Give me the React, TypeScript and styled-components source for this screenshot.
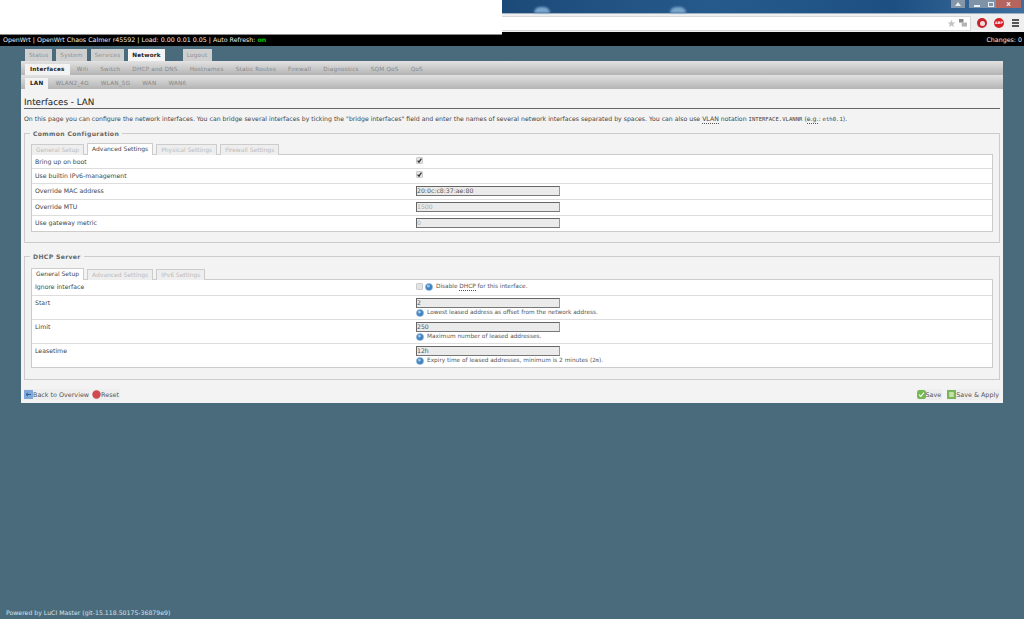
import styled, { createGlobalStyle } from "styled-components";

const GlobalStyle = createGlobalStyle`
	html, body {
		margin: 0;
		padding: 0;
		background: #4a6b7c;
	}
	body {
		font-family: "DejaVu Sans", Verdana, sans-serif;
		font-size: 6.6px;
		color: #333;
		text-rendering: geometricPrecision;
	}
`;

const mainTabs = ["Status", "System", "Services", "Network"];
const subTabs = ["Interfaces", "Wifi", "Switch", "DHCP and DNS", "Hostnames", "Static Routes", "Firewall", "Diagnostics", "SQM QoS", "QoS"];
const ifaceTabs = ["LAN", "WLAN2_4G", "WLAN_5G", "WAN", "WAN6"];

const InfoIcon = () => (
	<svg width="8" height="8" viewBox="0 0 8 8">
		<circle cx="4" cy="4" r="3.6" fill="#3f83c4" stroke="#9dbbd6" strokeWidth=".6" />
		<circle cx="3.4" cy="3" r="1.5" fill="#9cc6ea" />
	</svg>
);

const CheckBox = ({ checked }: { checked?: boolean }) => (
	<svg width="7" height="7" viewBox="0 0 7 7">
		<rect x=".4" y=".4" width="6.2" height="6.2" rx="1" fill="#e4e4e4" stroke="#b5b5b5" strokeWidth=".7" />
		{checked && <path d="M1.6 3.6 L3 5.2 L5.4 1.6" fill="none" stroke="#333" strokeWidth="1.3" />}
	</svg>
);

const App = () => {
	return (
		<Page>
			<GlobalStyle />
			<WhiteBlock />
			<Chrome>
				<WindowBand>
					<Streak />
					<Streak />
					<WindowButtons>
						<WinButton width={14} color="#8496a8">
							<svg width="6" height="4" viewBox="0 0 6 4"><path d="M0 4 L3 0 L6 4 Z" fill="#e8eef3" /></svg>
						</WinButton>
						<WinGap />
						<WinButton width={16} color="#7f93a8"><MinGlyph /></WinButton>
						<WinButton width={11} color="#7f93a8"><MaxGlyph /></WinButton>
						<WinButton width={25} color="#b5645e"><CloseGlyph>x</CloseGlyph></WinButton>
					</WindowButtons>
				</WindowBand>
				<BrowserBar>
					<AddressBox>
						<svg width="9" height="9" viewBox="0 0 24 24">
							<path d="M12 2 L15 9 L22 9.5 L16.8 14.2 L18.5 21.5 L12 17.6 L5.5 21.5 L7.2 14.2 L2 9.5 L9 9 Z" fill="#c4c4c4" />
						</svg>
						<svg width="8" height="8" viewBox="0 0 9 9">
							<rect x="0" y="0" width="5" height="4" fill="#8a8a8a" />
							<rect x="3" y="4" width="6" height="4.5" fill="#b5b5b5" />
						</svg>
					</AddressBox>
					<ExtIcon color="#c8242c"><ExtDot /></ExtIcon>
					<ExtIcon color="#d81f26"><AbpText>ABP</AbpText></ExtIcon>
					<Burger><span /><span /><span /></Burger>
				</BrowserBar>
			</Chrome>
			<HeaderBar>
				<span>OpenWrt | OpenWrt Chaos Calmer r45592 | Load: 0.00 0.01 0.05 | Auto Refresh: <OnText>on</OnText></span>
				<span>Changes: 0</span>
			</HeaderBar>

			<Wrapper>
				<MainNav>
					{mainTabs.map((t) => (
						<MainTab key={t} active={t === "Network"}>{t}</MainTab>
					))}
					<LogoutTab>Logout</LogoutTab>
				</MainNav>
				<Panel>
					<GreyNav>
						{subTabs.map((t, i) => (
							<GreyTab key={t} active={i === 0}>{t}</GreyTab>
						))}
					</GreyNav>
					<GreyNav>
						{ifaceTabs.map((t, i) => (
							<GreyTab key={t} active={i === 0}>{t}</GreyTab>
						))}
					</GreyNav>
					<Content>
						<Title>Interfaces - LAN</Title>
						<Description>
							On this page you can configure the network interfaces. You can bridge several interfaces by ticking the "bridge interfaces" field and enter the names of several network interfaces separated by spaces. You can also use <Abbr>VLAN</Abbr> notation <Code>INTERFACE.VLANNR</Code> (<Abbr>e.g.</Abbr>: <Code>eth0.1</Code>).
						</Description>

						<Section height={110} top={9}>
							<Legend>Common Configuration</Legend>
							<CfgTabs>
								<CfgTab>General Setup</CfgTab>
								<CfgTab active>Advanced Settings</CfgTab>
								<CfgTab>Physical Settings</CfgTab>
								<CfgTab>Firewall Settings</CfgTab>
							</CfgTabs>
							<CfgTable>
								<Row height={14}><RowLabel>Bring up on boot</RowLabel><RowValue><CheckBox checked /></RowValue></Row>
								<Row height={15}><RowLabel>Use builtin IPv6-management</RowLabel><RowValue><CheckBox checked /></RowValue></Row>
								<Row height={16}><RowLabel>Override MAC address</RowLabel><RowValue><TextBox>20:0c:c8:37:ae:80</TextBox></RowValue></Row>
								<Row height={16}><RowLabel>Override MTU</RowLabel><RowValue><TextBox muted>1500</TextBox></RowValue></Row>
								<Row height={15}><RowLabel>Use gateway metric</RowLabel><RowValue><TextBox muted>0</TextBox></RowValue></Row>
							</CfgTable>
						</Section>

						<Section height={124} top={11}>
							<Legend>DHCP Server</Legend>
							<CfgTabs>
								<CfgTab active>General Setup</CfgTab>
								<CfgTab>Advanced Settings</CfgTab>
								<CfgTab>IPv6 Settings</CfgTab>
							</CfgTabs>
							<CfgTable>
								<Row height={16}>
									<RowLabel>Ignore interface</RowLabel>
									<RowValue>
										<InlineHint><CheckBox /><InfoIcon /><HintText>Disable <Abbr>DHCP</Abbr> for this interface.</HintText></InlineHint>
									</RowValue>
								</Row>
								<Row height={24}>
									<RowLabel>Start</RowLabel>
									<RowValue><TextBox>2</TextBox><InlineHint><InfoIcon /><HintText>Lowest leased address as offset from the network address.</HintText></InlineHint></RowValue>
								</Row>
								<Row height={24}>
									<RowLabel>Limit</RowLabel>
									<RowValue><TextBox>250</TextBox><InlineHint><InfoIcon /><HintText>Maximum number of leased addresses.</HintText></InlineHint></RowValue>
								</Row>
								<Row height={23}>
									<RowLabel>Leasetime</RowLabel>
									<RowValue><TextBox>12h</TextBox><InlineHint><InfoIcon /><HintText>Expiry time of leased addresses, minimum is 2 minutes (<Code>2m</Code>).</HintText></InlineHint></RowValue>
								</Row>
							</CfgTable>
						</Section>

						<Actions>
							<ActionGroup gap={2}>
								<ActionButton>
									<svg width="9" height="9" viewBox="0 0 9 9">
										<rect width="9" height="9" fill="#7fa8d8" />
										<path d="M2 4.5 H7 M2 4.5 L4 2.8 M2 4.5 L4 6.2" stroke="#2c5f9e" strokeWidth="1" fill="none" />
									</svg>
									Back to Overview
								</ActionButton>
								<ActionButton>
									<svg width="9" height="9" viewBox="0 0 9 9"><circle cx="4.5" cy="4.5" r="4.2" fill="#cf4a50" /></svg>
									Reset
								</ActionButton>
							</ActionGroup>
							<ActionGroup gap={5}>
								<ActionButton>
									<svg width="9" height="9" viewBox="0 0 9 9">
										<rect width="9" height="9" rx="2.5" fill="#76b852" />
										<path d="M2 4.6 L3.8 6.4 L7 2.6" stroke="#fff" strokeWidth="1.1" fill="none" />
									</svg>
									Save
								</ActionButton>
								<ActionButton>
									<svg width="9" height="9" viewBox="0 0 9 9">
										<rect width="9" height="9" fill="#7ab55c" />
										<rect x="2.2" y="2" width="4.6" height="5" fill="#c8e0a8" />
									</svg>
									Save &amp; Apply
								</ActionButton>
							</ActionGroup>
						</Actions>
					</Content>
				</Panel>
			</Wrapper>
			<Footer>Powered by LuCI Master (git-15.118.50175-36879e9)</Footer>
		</Page>
	);
};

const Page = styled.div`
	position: relative;
	display: flex;
	flex-direction: column;
	width: 1024px;
	height: 619px;
	overflow: hidden;
	background: #4a6b7c;
`;

const WhiteBlock = styled.div`
	position: absolute;
	top: 0;
	left: 0;
	z-index: 2;
	width: 502px;
	height: 34px;
	background: #fff;
	border-bottom: 1px solid #8a8a8a;
`;

const Chrome = styled.div`
	display: flex;
	flex-direction: column;
	height: 32px;
	padding-left: 502px;
`;

const WindowBand = styled.div`
	display: flex;
	align-items: flex-start;
	gap: 120px;
	height: 13px;
	padding-left: 32px;
	background: linear-gradient(90deg, #1c4a78 0%, #265a8c 40%, #1d4f83 75%, #3f6f9e 100%);
`;

const Streak = styled.div`
	width: 16px;
	height: 6px;
	margin-top: 7px;
	border-radius: 8px 8px 0 0;
	background: #7ba6cc;
	filter: blur(1px);
`;

const WindowButtons = styled.div`
	display: flex;
	margin-left: auto;
	margin-right: 3px;
`;

const WinGap = styled.div`
	width: 4px;
`;

const WinButton = styled.div<{ width: number; color: string }>`
	display: flex;
	align-items: center;
	justify-content: center;
	width: ${({ width }) => width}px;
	height: 8px;
	background: ${({ color }) => color};
`;

const MinGlyph = styled.div`
	width: 6px;
	height: 2px;
	margin-top: 3px;
	background: #e8eef3;
`;

const MaxGlyph = styled.div`
	box-sizing: border-box;
	width: 6px;
	height: 5px;
	border: 1px solid #e8eef3;
`;

const CloseGlyph = styled.span`
	color: #f3e6e4;
	font-size: 7px;
	font-weight: bold;
	line-height: 8px;
`;

const BrowserBar = styled.div`
	display: flex;
	align-items: center;
	height: 19px;
	padding-right: 4px;
	background: #efefef;
	border-top: 1px solid #9fb1c2;
	box-sizing: border-box;
`;

const AddressBox = styled.div`
	display: flex;
	flex: 1;
	align-items: center;
	justify-content: flex-end;
	gap: 3px;
	box-sizing: border-box;
	height: 15px;
	padding-right: 3px;
	margin-right: 6px;
	background: #fff;
	border: 1px solid #d8d8d8;
	border-left: 0;
`;

const ExtIcon = styled.div<{ color: string }>`
	display: flex;
	align-items: center;
	justify-content: center;
	width: 10px;
	height: 10px;
	margin-right: 7px;
	border-radius: 50%;
	background: ${({ color }) => color};
`;

const ExtDot = styled.div`
	width: 5px;
	height: 5px;
	border-radius: 50%;
	background: #f3dede;
`;

const AbpText = styled.span`
	color: #fff;
	font-size: 3.5px;
	font-weight: bold;
`;

const Burger = styled.div`
	display: flex;
	flex-direction: column;
	gap: 1.5px;
	width: 7px;
	margin: 0 1px 0 1px;
	span {
		height: 1.5px;
		background: #555;
	}
`;

const HeaderBar = styled.div`
	position: relative;
	display: flex;
	align-items: center;
	justify-content: space-between;
	box-sizing: border-box;
	height: 14px;
	padding: 3px 2px 0 3px;
	background: #000;
	color: #eee;
	font-size: 6.3px;
`;

const OnText = styled.span`
	color: #0c0;
	font-weight: bold;
`;

const Wrapper = styled.div`
	display: flex;
	flex: 1;
	flex-direction: column;
	padding: 3px 21px 0;
`;

const MainNav = styled.div`
	display: flex;
	gap: 4px;
	height: 12px;
	padding-left: 4px;
`;

const MainTab = styled.div<{ active?: boolean }>`
	padding: 0 4px;
	background: ${({ active }) => (active ? "#f4f4f4" : "#cfcfcf")};
	color: ${({ active }) => (active ? "#222" : "#8f8f8f")};
	font-weight: ${({ active }) => (active ? "bold" : "normal")};
	font-size: 5.7px;
	letter-spacing: 0.2px;
	line-height: 14px;
`;

const LogoutTab = styled(MainTab)`
	margin-left: 14px;
`;

const Panel = styled.div`
	display: flex;
	flex-direction: column;
	width: 982px;
	height: 342px;
	background: #f3f3f3;
`;

const GreyNav = styled.div`
	display: flex;
	gap: 2px;
	height: 14px;
	padding-left: 4px;
	background: linear-gradient(#e2e2e2, #b4b4b4);
`;

const GreyTab = styled.div<{ active?: boolean }>`
	margin-top: 3px;
	padding: 0 5px;
	background: ${({ active }) => (active ? "#f3f3f3" : "transparent")};
	color: ${({ active }) => (active ? "#222" : "#888")};
	font-weight: ${({ active }) => (active ? "bold" : "normal")};
	font-size: 5.7px;
	letter-spacing: 0.22px;
	line-height: 12px;
`;

const Content = styled.div`
	display: flex;
	flex: 1;
	flex-direction: column;
	padding: 0 3px;
`;

const Title = styled.h2`
	box-sizing: border-box;
	height: 20px;
	margin: 0;
	padding-top: 9px;
	border-bottom: 1px solid #666;
	color: #222;
	font-size: 8.8px;
	font-weight: normal;
	line-height: 10px;
`;

const Description = styled.p`
	height: 14px;
	margin: 0;
	padding-top: 6px;
	color: #444;
	font-size: 6.2px;
	line-height: 9px;
	white-space: nowrap;
`;

const Abbr = styled.span`
	border-bottom: 1px dotted #555;
`;

const Code = styled.span`
	font-family: "DejaVu Sans Mono", monospace;
	font-size: 5.6px;
`;

const Section = styled.div<{ height: number; top: number }>`
	position: relative;
	box-sizing: border-box;
	height: ${({ height }) => height}px;
	margin-top: 4px;
	padding: ${({ top }) => top}px 6px 0;
	border: 1px solid #ccc;
	background: #f3f3f3;
	& + & {
		margin-top: 13px;
	}
`;

const Legend = styled.div`
	position: absolute;
	top: -4px;
	left: 5px;
	padding: 0 3px;
	background: #f3f3f3;
	color: #666;
	font-size: 6.1px;
	font-weight: bold;
	letter-spacing: 0.35px;
	line-height: 10px;
`;

const CfgTabs = styled.div`
	display: flex;
	gap: 3px;
	height: 12px;
`;

const CfgTab = styled.div<{ active?: boolean }>`
	position: relative;
	z-index: 1;
	box-sizing: border-box;
	height: ${({ active }) => (active ? "12px" : "11px")};
	padding: 0 4px;
	margin-top: ${({ active }) => (active ? "0" : "1px")};
	border: 1px solid #ccc;
	border-bottom: 0;
	background: ${({ active }) => (active ? "#fff" : "#eee")};
	color: ${({ active }) => (active ? "#444" : "#bbb")};
	font-size: 6px;
	line-height: 11px;
`;

const CfgTable = styled.div`
	margin-top: -1px;
	border: 1px solid #ccc;
	background: #fff;
`;

const Row = styled.div<{ height: number }>`
	display: flex;
	box-sizing: border-box;
	height: ${({ height }) => height}px;
	border-bottom: 1px solid #ddd;
	&:last-child {
		border-bottom: 0;
	}
`;

const RowLabel = styled.div`
	width: 381px;
	padding: 4px 0 0 3px;
	color: #444;
	font-size: 6.2px;
	line-height: 8px;
`;

const RowValue = styled.div`
	display: flex;
	flex: 1;
	flex-direction: column;
	align-items: flex-start;
	padding-top: 2px;
`;

const TextBox = styled.div<{ muted?: boolean }>`
	box-sizing: border-box;
	width: 144px;
	height: 10px;
	border: 1px solid;
	border-color: #666 #999 #777 #666;
	background: #ebebeb;
	color: ${({ muted }) => (muted ? "#aaa" : "#555")};
	font-size: 6.2px;
	line-height: 9px;
`;

const InlineHint = styled.div`
	display: flex;
	align-items: center;
	gap: 2px;
	height: 9px;
`;

const HintText = styled.span`
	margin-left: 1px;
	color: #555;
	font-size: 5.8px;
	line-height: 8px;
`;

const Actions = styled.div`
	display: flex;
	justify-content: space-between;
	margin-top: 9px;
`;

const ActionGroup = styled.div<{ gap: number }>`
	display: flex;
	gap: ${({ gap }) => gap}px;
`;

const ActionButton = styled.div`
	display: flex;
	align-items: center;
	height: 11px;
	padding-right: 1px;
	color: #555;
	font-size: 6.4px;
	background: #eee;
`;

const Footer = styled.div`
	position: absolute;
	left: 6px;
	bottom: 1px;
	color: #d8e2e8;
	font-size: 6.2px;
	line-height: 8px;
`;

export default App;
